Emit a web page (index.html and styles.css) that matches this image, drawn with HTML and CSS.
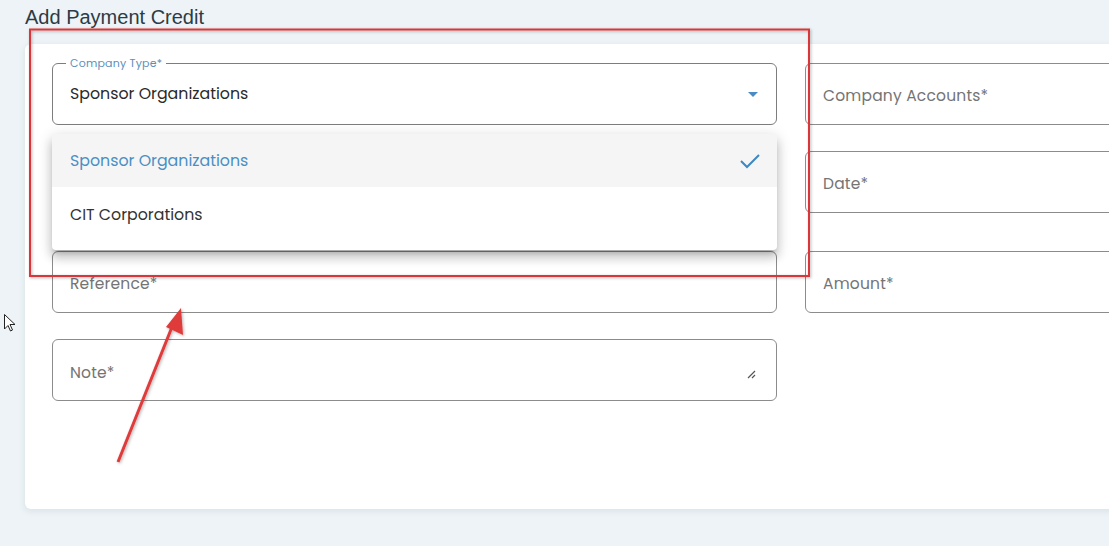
FILE: index.html
```html
<!DOCTYPE html>
<html>
<head>
<meta charset="utf-8">
<link rel="stylesheet" href="styles.css">
</head>
<body>
<div class="page">
  <h1 class="title">Add Payment Credit</h1>
  <div class="card">
    <div class="grid">
      <div class="cell">
        <div class="field focused">
          <span class="float-label">Company Type*</span>
          <span class="value">Sponsor Organizations</span>
          <svg class="caret" width="10" height="5" viewBox="0 0 10 5"><path d="M0 0 L10 0 L5 5 Z" fill="#4a8cc2"/></svg>
        </div>
        <div class="menu">
          <div class="option selected">
            <span>Sponsor Organizations</span>
            <svg width="22" height="16" viewBox="0 0 22 16"><path d="M2 8 L8 14 L20 2" fill="none" stroke="#3d87c2" stroke-width="2"/></svg>
          </div>
          <div class="option">CIT Corporations</div>
        </div>
      </div>
      <div class="cell"><div class="field"><span class="placeholder">Company Accounts*</span></div></div>
      <div class="cell row2"><div class="field"><span class="placeholder">Payment Mode*</span></div></div>
      <div class="cell row2"><div class="field"><span class="placeholder">Date*</span></div></div>
      <div class="cell row3"><div class="field"><span class="placeholder">Reference*</span></div></div>
      <div class="cell row3"><div class="field"><span class="placeholder">Amount*</span></div></div>
      <div class="cell row4">
        <div class="field">
          <span class="placeholder note">Note*</span>
          <svg class="grip" width="9" height="9" viewBox="0 0 9 9"><path d="M1 8 L8 1 M5 8 L8 5" stroke="#555" stroke-width="1.2" fill="none"/></svg>
        </div>
      </div>
      <div class="cell row4"></div>
    </div>
  </div>
</div>
<svg class="annot" width="1109" height="546" viewBox="0 0 1109 546">
  <defs>
    <filter id="sh" x="-5%" y="-5%" width="110%" height="110%">
      <feDropShadow dx="1" dy="1" stdDeviation="1.4" flood-color="#000" flood-opacity="0.3"/>
    </filter>
  </defs>
  <g filter="url(#sh)">
    <rect x="30" y="29.5" width="779" height="246.5" fill="none" stroke="#d9363a" stroke-width="2"/>
    <path d="M118 462 L174 322" stroke="#e03a3a" stroke-width="3" fill="none"/>
    <path d="M181 308 L166 327 L183 335 Z" fill="#e03a3a"/>
  </g>
  <path d="M4.5 314.5 L4.5 329 L8 325.5 L10.5 331 L12.5 330 L10 324.5 L15 324.5 Z" fill="#fff" stroke="#222" stroke-width="1"/>
</svg>
</body>
</html>
```
FILE: styles.css
```css
html, body {
  margin: 0;
  padding: 0;
  width: 1109px;
  height: 546px;
  overflow: hidden;
  background: #edf3f6;
  font-family: "Poppins", "Inter", "Noto Sans", sans-serif;
}
.page {
  width: 1109px;
  height: 546px;
  overflow: hidden;
  box-sizing: border-box;
  padding-left: 25px;
}
.title {
  margin: 0;
  height: 44px;
  padding-top: 5px;
  box-sizing: border-box;
  font-family: "Liberation Sans", Arial, sans-serif;
  font-weight: 400;
  font-size: 20px;
  line-height: 24px;
  color: #2d3b45;
}
.card {
  width: 1540px;
  height: 465px;
  background: #fff;
  border-radius: 6px;
  box-shadow: 0 2px 6px rgba(120, 150, 170, 0.18);
  box-sizing: border-box;
  padding: 19px 27px;
}
.grid {
  display: grid;
  grid-template-columns: 725px 725px;
  column-gap: 28px;
}
.cell {
  position: relative;
}
.row2 { margin-top: 26px; }
.row3 { margin-top: 38px; }
.row4 { margin-top: 26px; }
.field {
  position: relative;
  height: 62px;
  box-sizing: border-box;
  border: 1px solid #8c8c8c;
  border-radius: 6px;
  display: flex;
  align-items: center;
  padding: 0 17px;
  background: #fff;
}
.field.focused {
  border: 1.6px solid #7d7d7d;
}
.float-label {
  position: absolute;
  top: -8px;
  left: 13px;
  padding: 0 4px;
  background: #fff;
  font-size: 11px;
  line-height: 14px;
  color: #5c8fba;
  letter-spacing: 0.2px;
}
.value {
  font-size: 15.8px;
  color: #2a2a2a;
  margin-top: -2px;
}
.placeholder {
  font-size: 15.5px;
  color: #747474;
  letter-spacing: 0.2px;
  padding-top: 2px;
}
.placeholder.note {
  padding-top: 4px;
}
.caret {
  position: absolute;
  right: 18px;
  top: 28px;
}
.grip {
  position: absolute;
  right: 20px;
  top: 30px;
}
.menu {
  position: absolute;
  left: 0;
  top: 71px;
  width: 725px;
  height: 116px;
  background: #fff;
  border-radius: 4px;
  box-shadow: 0 5px 5px -3px rgba(0,0,0,0.2), 0 8px 10px 1px rgba(0,0,0,0.14), 0 3px 14px 2px rgba(0,0,0,0.12);
  z-index: 5;
}
.option {
  height: 53px;
  display: flex;
  align-items: center;
  justify-content: space-between;
  padding: 0 16px 0 18px;
  font-size: 15.8px;
  color: #333;
}
.option.selected {
  background: #f5f5f5;
  color: #4a8fc4;
}
.option + .option {
  padding-top: 1px;
}
.annot {
  position: absolute;
  left: 0;
  top: 0;
  pointer-events: none;
  z-index: 10;
}
```
